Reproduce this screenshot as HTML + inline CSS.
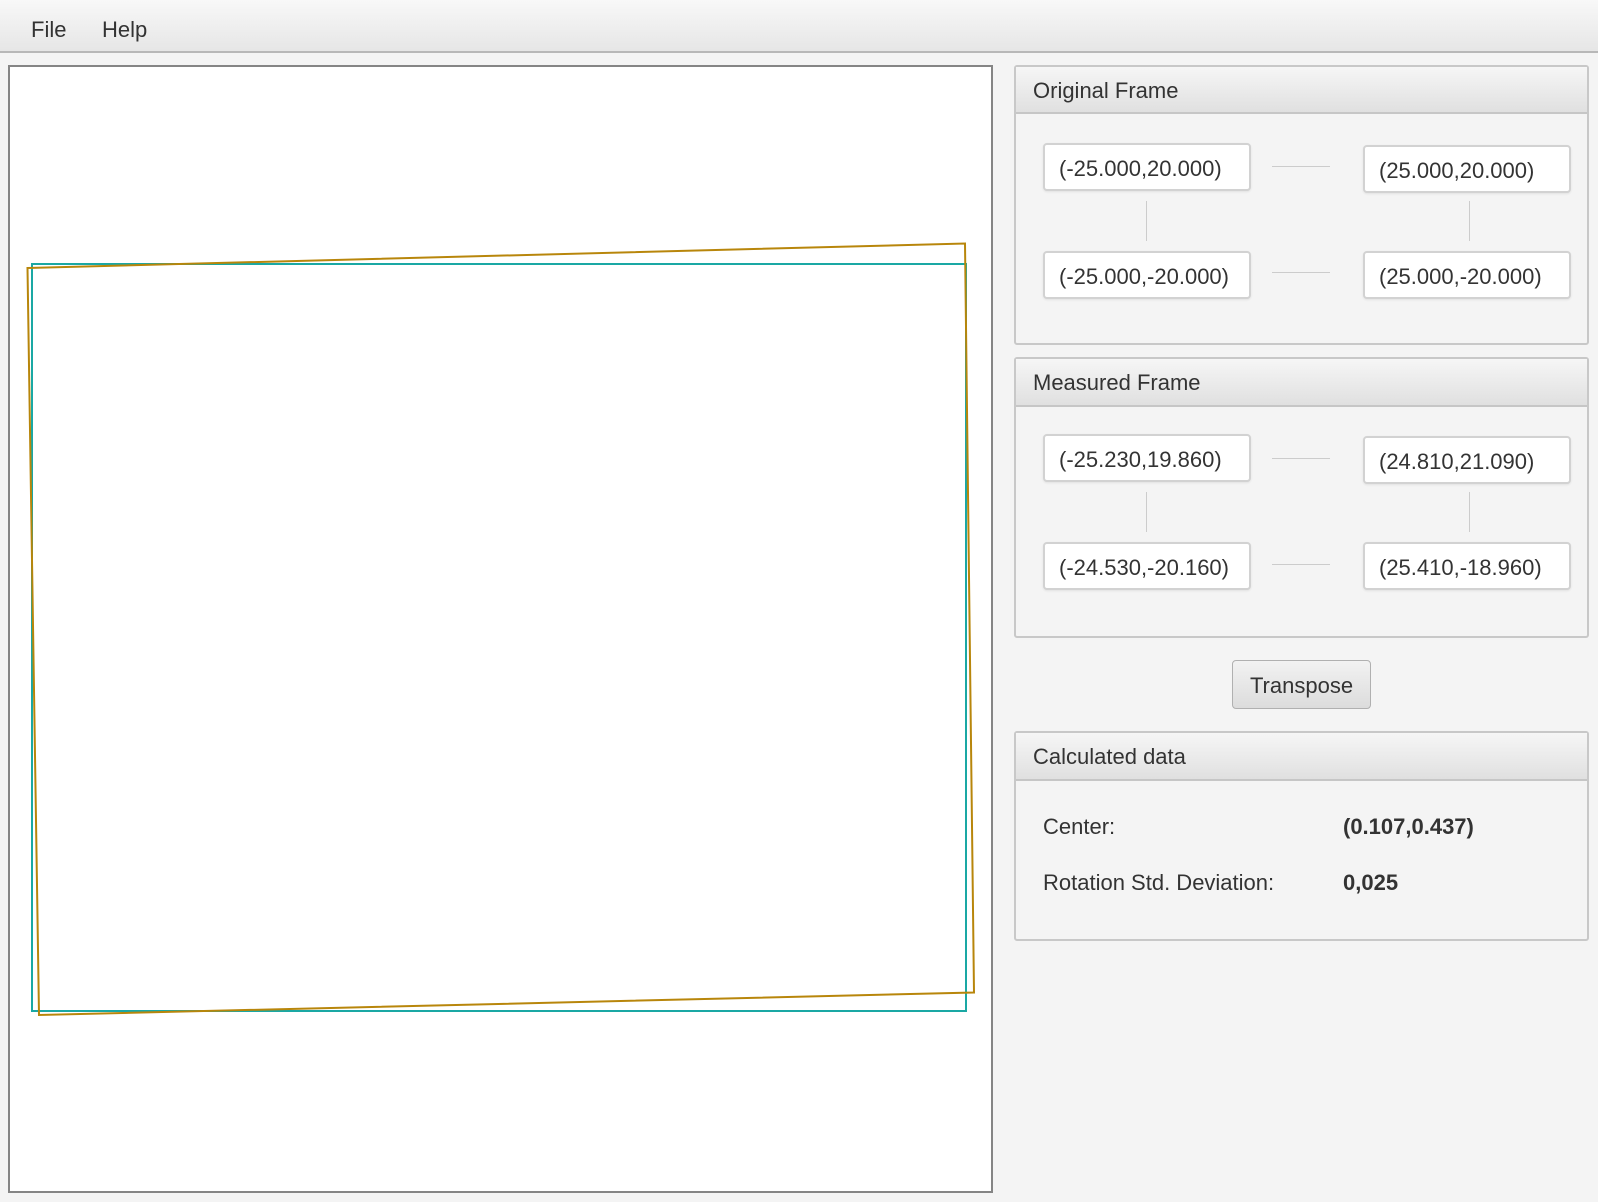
<!DOCTYPE html>
<html><head><meta charset="utf-8"><style>
*{margin:0;padding:0;box-sizing:border-box}
body{width:1598px;height:1202px;background:#f4f4f4;font-family:"Liberation Sans",sans-serif;color:#333;position:relative;overflow:hidden}
.abs{position:absolute}
.menu{left:0;top:0;width:1598px;height:53px;background:linear-gradient(#f8f8f8,#e6e6e6);border-bottom:2px solid #b8b8b8}
.mi{top:17px;font-size:22px;color:#333}
.canvas{left:8px;top:65px;width:985px;height:1128px;background:#fff;border:2px solid #858585}
.panel{left:1014px;width:575px;border:2px solid #c8c8c8;border-radius:3px;background:#f4f4f4}
.ph{left:0;top:0;width:100%;background:linear-gradient(#f6f6f6,#e0e0e0);border-bottom:2px solid #c6c6c6;font-size:22px;padding-left:17px;color:#333}
.tf{width:208px;height:48px;background:#fff;border:2px solid #d2d2d2;border-radius:4px;font-size:22px;padding-left:14px;line-height:47px;color:#333;box-shadow:0 1px 2px rgba(0,0,0,0.08)}
.hl{height:1px;background:#ccc;width:58px}
.vl{width:1px;background:#ccc;height:40px}
.btn{left:1232px;top:660px;width:139px;height:49px;border:1px solid #b0b0b0;border-radius:4px;background:linear-gradient(#f2f2f2,#dcdcdc);font-size:22px;text-align:center;line-height:49px;color:#333}
.lbl{font-size:22px;color:#333}
</style></head><body>
<div class="abs menu"></div>
<div class="abs mi" style="left:31px">File</div>
<div class="abs mi" style="left:102px">Help</div>
<div class="abs canvas"></div>
<svg class="abs" style="left:0;top:0" width="1598" height="1202">
<rect x="32" y="264" width="934" height="747" fill="none" stroke="#1aa8a4" stroke-width="2"/>
<polygon points="27.5,268 965,243.5 974,992.5 39,1015" fill="none" stroke="#b8860b" stroke-width="2"/>
</svg>

<div class="abs panel" style="top:65px;height:280px">
 <div class="abs ph" style="height:47px;line-height:47px">Original Frame</div>
</div>
<div class="abs tf" style="left:1043px;top:143px">(-25.000,20.000)</div>
<div class="abs tf" style="left:1363px;top:145px">(25.000,20.000)</div>
<div class="abs tf" style="left:1043px;top:251px">(-25.000,-20.000)</div>
<div class="abs tf" style="left:1363px;top:251px">(25.000,-20.000)</div>
<div class="abs hl" style="left:1272px;top:166px"></div>
<div class="abs hl" style="left:1272px;top:272px"></div>
<div class="abs vl" style="left:1146px;top:201px"></div>
<div class="abs vl" style="left:1469px;top:201px"></div>

<div class="abs panel" style="top:357px;height:281px">
 <div class="abs ph" style="height:48px;line-height:48px">Measured Frame</div>
</div>
<div class="abs tf" style="left:1043px;top:434px">(-25.230,19.860)</div>
<div class="abs tf" style="left:1363px;top:436px">(24.810,21.090)</div>
<div class="abs tf" style="left:1043px;top:542px">(-24.530,-20.160)</div>
<div class="abs tf" style="left:1363px;top:542px">(25.410,-18.960)</div>
<div class="abs hl" style="left:1272px;top:458px"></div>
<div class="abs hl" style="left:1272px;top:564px"></div>
<div class="abs vl" style="left:1146px;top:492px"></div>
<div class="abs vl" style="left:1469px;top:492px"></div>

<div class="abs btn">Transpose</div>

<div class="abs panel" style="top:731px;height:210px">
 <div class="abs ph" style="height:48px;line-height:48px">Calculated data</div>
</div>
<div class="abs lbl" style="left:1043px;top:814px">Center:</div>
<div class="abs lbl" style="left:1343px;top:814px;font-weight:bold">(0.107,0.437)</div>
<div class="abs lbl" style="left:1043px;top:870px">Rotation Std. Deviation:</div>
<div class="abs lbl" style="left:1343px;top:870px;font-weight:bold">0,025</div>
</body></html>
